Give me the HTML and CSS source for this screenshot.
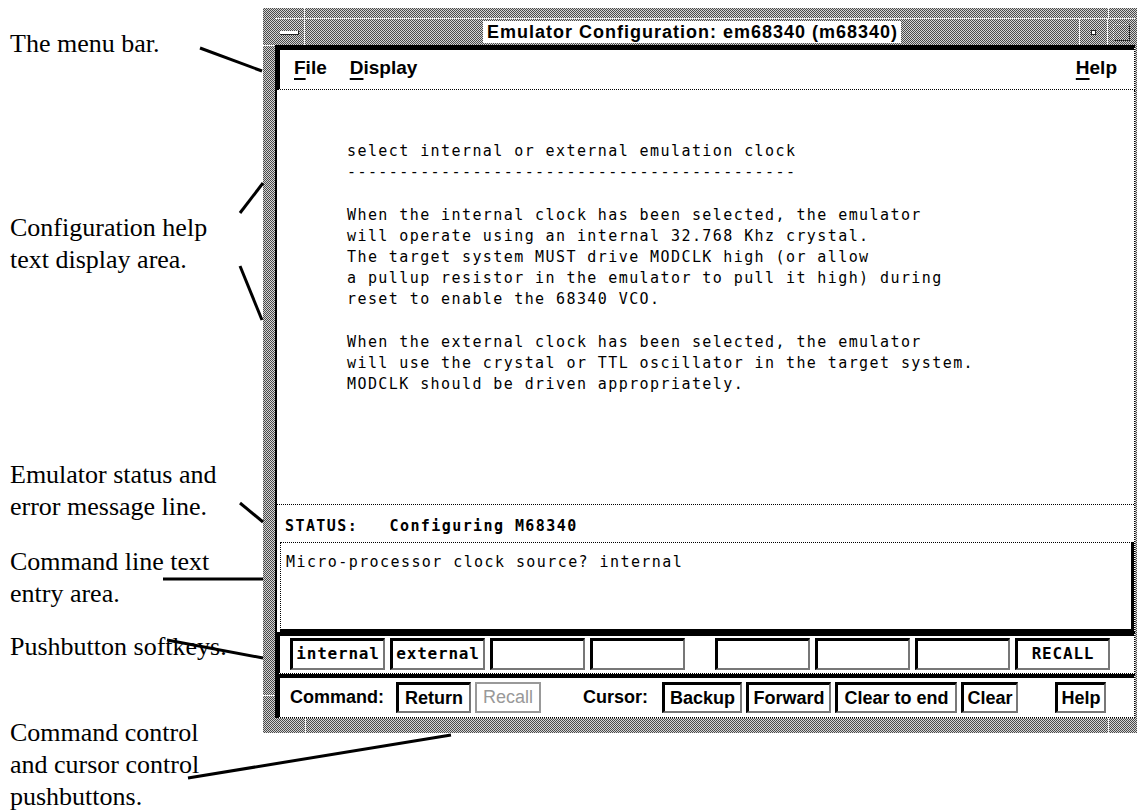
FILE: index.html
```html
<!DOCTYPE html>
<html lang="en">
<head>
  <meta charset="UTF-8">
  <title>Emulator Configuration: em68340 (m68340)</title>
  <link rel="stylesheet" href="styles.css">
</head>
<body>
<div class="page">

  <!-- callout labels -->
  <div class="notes">
    <p class="note note-menu">The menu bar.</p>
    <p class="note note-help">Configuration help<br>text display area.</p>
    <p class="note note-status">Emulator status and<br>error message line.</p>
    <p class="note note-cmdline">Command line text<br>entry area.</p>
    <p class="note note-softkeys">Pushbutton softkeys.</p>
    <p class="note note-controls">Command control<br>and cursor control<br>pushbuttons.</p>
  </div>

  <!-- emulator window -->
  <div class="window">
    <span class="tick tick-top-l"></span>
    <span class="tick tick-top-r"></span>
    <span class="tick tick-left-t"></span>
    <span class="tick tick-left-b"></span>
    <span class="tick tick-bot-l"></span>
    <span class="tick tick-bot-r"></span>

    <div class="titlebar">
      <div class="tb-btn tb-menu"><span class="bar-icon"></span></div>
      <div class="tb-title"><span class="title-text">Emulator Configuration: em68340 (m68340)</span></div>
      <div class="tb-btn tb-min"><span class="dot-icon"></span></div>
      <div class="tb-btn tb-max"><span class="box-icon"></span></div>
    </div>

    <div class="menubar">
      <span class="menu"><u>F</u>ile</span>
      <span class="menu"><u>D</u>isplay</span>
      <span class="menu menu-help"><u>H</u>elp</span>
    </div>

    <div class="work">
<pre class="helptext">select internal or external emulation clock
-------------------------------------------

When the internal clock has been selected, the emulator
will operate using an internal 32.768 Khz crystal.
The target system MUST drive MODCLK high (or allow
a pullup resistor in the emulator to pull it high) during
reset to enable the 68340 VCO.

When the external clock has been selected, the emulator
will use the crystal or TTL oscillator in the target system.
MODCLK should be driven appropriately.</pre>
      <div class="status">STATUS:   Configuring M68340</div>
      <div class="cmdline">Micro-processor clock source? internal</div>
    </div>

    <div class="softkeys">
      <div class="keygroup">
        <span class="softkey">internal</span>
        <span class="softkey">external</span>
        <span class="softkey"></span>
        <span class="softkey"></span>
      </div>
      <div class="keygroup">
        <span class="softkey"></span>
        <span class="softkey"></span>
        <span class="softkey"></span>
        <span class="softkey">RECALL</span>
      </div>
    </div>

    <div class="controls">
      <span class="ctl-label ctl-command">Command:</span>
      <span class="pushbtn btn-return">Return</span>
      <span class="pushbtn btn-recall disabled">Recall</span>
      <span class="ctl-label ctl-cursor">Cursor:</span>
      <span class="pushbtn btn-backup">Backup</span>
      <span class="pushbtn btn-forward">Forward</span>
      <span class="pushbtn btn-cleareol">Clear to end</span>
      <span class="pushbtn btn-clear">Clear</span>
      <span class="pushbtn btn-help">Help</span>
    </div>
  </div>

  <!-- leader lines from labels to the window -->
  <svg class="leaders" width="1140" height="812" viewBox="0 0 1140 812">
    <g stroke="#000" stroke-width="3">
      <line x1="200" y1="48" x2="262" y2="71"/>
      <line x1="240" y1="213" x2="263" y2="183"/>
      <line x1="240" y1="266" x2="262" y2="320"/>
      <line x1="240" y1="503" x2="263" y2="522"/>
      <line x1="163" y1="579" x2="263" y2="579"/>
      <line x1="167" y1="640" x2="263" y2="658"/>
      <line x1="188" y1="778" x2="451" y2="735"/>
    </g>
  </svg>
</div>
</body>
</html>
```

FILE: styles.css
```css
body {
  margin: 0;
  background: #fff;
  color: #000;
  overflow: hidden;
}

.page {
  position: relative;
  display: flex;
  width: 1140px;
  height: 812px;
}

/* Callout labels */
.notes {
  flex: none;
  width: 263px;
  padding-left: 10px;
  box-sizing: border-box;
  font-family: "Liberation Serif", "Times New Roman", serif;
  font-size: 26px;
  line-height: 32px;
}

.note {
  margin: 0;
  white-space: nowrap;
}

.note-menu { margin-top: 28px; }
.note-help { margin-top: 152px; }
.note-status { margin-top: 183px; }
.note-cmdline { margin-top: 23px; }
.note-softkeys { margin-top: 21px; }
.note-controls { margin-top: 54px; }

.leaders {
  position: absolute;
  left: 0;
  top: 0;
  pointer-events: none;
}

/* Window frame */
.window {
  position: relative;
  flex: none;
  width: 874px;
  height: 725px;
  margin-top: 8px;
  padding: 10px 2px 15px 12px;
  box-sizing: border-box;
  background: repeating-conic-gradient(#4a4a4a 0 25%, #d4d4d4 0 50%) 0 0 / 2px 2px;
}

.tick {
  position: absolute;
  background: #f4f4f4;
}
.tick-top-l { left: 41px; top: 0; width: 1px; height: 10px; }
.tick-top-r { left: 845px; top: 0; width: 1px; height: 10px; }
.tick-left-t { left: 0; top: 37px; width: 12px; height: 1px; }
.tick-left-b { left: 0; top: 687px; width: 12px; height: 1px; }
.tick-bot-l { left: 42px; bottom: 0; width: 1px; height: 15px; }
.tick-bot-r { left: 845px; bottom: 0; width: 1px; height: 15px; }

.titlebar {
  display: flex;
  height: 27px;
  box-sizing: border-box;
  border-top: 1px dotted #fff;
}

.tb-btn {
  flex: none;
  display: flex;
  align-items: center;
  justify-content: center;
}

.tb-menu {
  width: 29px;
  border-right: 1px solid #f4f4f4;
}

.tb-title {
  flex: 1;
  display: flex;
  justify-content: center;
}

.title-text {
  margin-top: 2px;
  height: 22px;
  padding: 0 3px 0 4px;
  background: #fff;
  font: bold 18px/22px "Liberation Sans", Arial, sans-serif;
  letter-spacing: 1px;
  white-space: nowrap;
}

.tb-min {
  width: 27px;
  border-left: 1px solid #f4f4f4;
}

.tb-max {
  width: 27px;
  border-left: 1px solid #f4f4f4;
}

.bar-icon {
  width: 18px;
  height: 3px;
  margin-top: 2px;
  background: #fff;
  border-bottom: 1px solid #222;
  border-right: 1px solid #222;
}

.dot-icon {
  width: 3px;
  height: 3px;
  background: #fff;
  border: 1px solid #222;
}

.box-icon {
  width: 15px;
  height: 15px;
  border: 1px dotted #fff;
  border-right-color: #111;
  border-bottom-color: #111;
}

/* Menu bar */
.menubar {
  display: flex;
  gap: 23px;
  height: 45px;
  box-sizing: border-box;
  padding: 7px 17px 0 14px;
  background: #fff;
  border-top: 5px solid #000;
  border-left: 5px solid #000;
  border-right: 1px dotted #000;
  border-bottom: 1px dotted #000;
  font: bold 19px/22px "Liberation Sans", Arial, sans-serif;
}

.menu u {
  text-underline-offset: 4px;
  text-decoration-thickness: 2px;
}

.menu-help {
  margin-left: auto;
}

/* Help text, status and command line */
.work {
  background: #fff;
  border-left: 2px solid #000;
  border-right: 1px dotted #000;
}

.helptext {
  margin: 0;
  height: 415px;
  box-sizing: border-box;
  padding: 51px 0 0 70px;
  border-bottom: 1px dotted #000;
  font-family: "DejaVu Sans Mono", monospace;
  font-size: 15px;
  line-height: 21.2px;
  letter-spacing: 1.42px;
}

.status {
  height: 37px;
  box-sizing: border-box;
  padding: 11px 0 0 8px;
  font-family: "DejaVu Sans Mono", monospace;
  font-weight: bold;
  font-size: 15px;
  line-height: 21px;
  letter-spacing: 1.42px;
  white-space: pre;
}

.cmdline {
  height: 90px;
  margin-left: 3px;
  box-sizing: border-box;
  padding: 9px 0 0 5px;
  border-top: 1px dotted #000;
  border-left: 1px dotted #000;
  border-right: 3px solid #000;
  border-bottom: 3px solid #000;
  font-family: "DejaVu Sans Mono", monospace;
  font-size: 15px;
  line-height: 21px;
  letter-spacing: 1.42px;
}

/* Softkey row */
.softkeys {
  display: flex;
  gap: 30px;
  height: 42px;
  box-sizing: border-box;
  padding: 2px 0 0 10px;
  background: #fff;
  border-top: 4px solid #000;
  border-left: 5px solid #000;
  border-right: 1px dotted #000;
  border-bottom: 1px dotted #000;
}

.keygroup {
  display: flex;
  gap: 5px;
}

.softkey {
  width: 95px;
  height: 32px;
  box-sizing: border-box;
  border-style: solid;
  border-width: 3px 2px 2px 3px;
  border-color: #000 #777 #777 #000;
  text-align: center;
  font-family: "DejaVu Sans Mono", monospace;
  font-weight: bold;
  font-size: 16px;
  line-height: 26px;
  letter-spacing: 0.8px;
}

/* Command / cursor row */
.controls {
  display: flex;
  align-items: flex-start;
  gap: 4px;
  height: 44px;
  box-sizing: border-box;
  padding: 4px 0 0 10px;
  background: #fff;
  border-top: 4px solid #000;
  border-left: 5px solid #000;
  border-right: 1px dotted #000;
  border-bottom: 1px dotted #000;
  font: bold 18px/26px "Liberation Sans", Arial, sans-serif;
}

.ctl-label {
  line-height: 31px;
  white-space: nowrap;
}

.ctl-command { width: 102px; }
.ctl-cursor { width: 75px; margin-left: 38px; }

.pushbtn {
  height: 31px;
  box-sizing: border-box;
  border-style: solid;
  border-width: 3px 2px 2px 3px;
  border-color: #000 #777 #777 #000;
  text-align: center;
  white-space: nowrap;
}

.pushbtn.disabled {
  border-width: 2px;
  border-color: #999;
  color: #999;
  font-weight: normal;
  line-height: 27px;
}

.btn-return { width: 75px; }
.btn-recall { width: 66px; }
.btn-backup { width: 80px; }
.btn-forward { width: 85px; }
.btn-cleareol { width: 122px; }
.btn-clear { width: 57px; }
.btn-help { width: 51px; margin-left: 33px; }
```
